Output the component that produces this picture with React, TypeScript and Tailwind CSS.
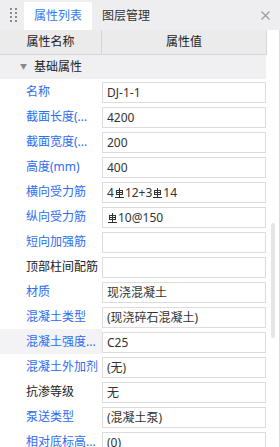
import React from "react";

const FONT = { fontFamily: '"Noto Sans", "Noto Sans CJK SC", sans-serif' };

function Rebar() {
  return (
    <svg width="9" height="10" viewBox="0 0 9 10" className="inline-block align-top mt-[1px] mx-[1px]" fill="none" stroke="#333" strokeWidth="1">
      <line x1="4.5" y1="0" x2="4.5" y2="9.5" />
      <rect x="1.5" y="2.5" width="6" height="4" />
      <line x1="1.5" y1="4.5" x2="7.5" y2="4.5" />
      <line x1="0" y1="9.5" x2="9" y2="9.5" />
    </svg>
  );
}

type Row = { label: string; value: React.ReactNode; black?: boolean; hover?: boolean };

const rows: Row[] = [
  { label: "名称", value: "DJ-1-1" },
  { label: "截面长度(...", value: "4200" },
  { label: "截面宽度(...", value: "200" },
  { label: "高度(mm)", value: "400" },
  { label: "横向受力筋", value: (<>4<Rebar />12+3<Rebar />14</>) },
  { label: "纵向受力筋", value: (<><Rebar />10@150</>) },
  { label: "短向加强筋", value: "" },
  { label: "顶部柱间配筋", value: "", black: true },
  { label: "材质", value: "现浇混凝土" },
  { label: "混凝土类型", value: "(现浇碎石混凝土)" },
  { label: "混凝土强度...", value: "C25", hover: true },
  { label: "混凝土外加剂", value: "(无)" },
  { label: "抗渗等级", value: "无", black: true },
  { label: "泵送类型", value: "(混凝土泵)" },
  { label: "相对底标高...", value: "(0)" },
];

export default function App() {
  return (
    <div className="w-[280px] h-[447px] overflow-hidden bg-white text-[12px] leading-[16px] text-[#333]" style={FONT}>
      {/* tab bar */}
      <div className="h-[30px] bg-[#eeeef0] flex items-end">
        <div className="w-[24px] h-[30px] flex items-center justify-center">
          <div className="grid grid-cols-2 gap-x-[3px] gap-y-[2px] ml-[2px]">
            {Array.from({ length: 8 }).map((_, i) => (
              <div key={i} className="w-[2px] h-[2px] bg-[#8a8a8a]" />
            ))}
          </div>
        </div>
        <div className="w-[68px] h-[28px] bg-white flex items-center justify-center text-[#2f7bf0]">属性列表</div>
        <div className="h-[28px] flex items-center pl-[10px] text-[#333]">图层管理</div>
        <div className="flex-1" />
        <div className="h-[30px] w-[30px] flex items-center justify-center">
          <svg width="9" height="9" viewBox="0 0 9 9" stroke="#999" strokeWidth="1.1">
            <line x1="0.5" y1="0.5" x2="8.5" y2="8.5" />
            <line x1="8.5" y1="0.5" x2="0.5" y2="8.5" />
          </svg>
        </div>
      </div>
      {/* body */}
      <div className="flex">
        <div className="w-[267px] shrink-0">
          <div className="h-[25px] flex bg-[#ebebeb] border-b border-[#d6d6d6] border-r">
            <div className="w-[102px] border-r border-[#d6d6d6] flex items-center justify-center text-[#222]">属性名称</div>
            <div className="flex-1 flex items-center justify-center text-[#222]">属性值</div>
          </div>
          <div className="h-[24px] w-[266px] bg-[#f0f0f2] flex items-center">
            <span className="ml-[20px] mr-[7px] text-[7px] text-[#888]">▼</span>
            <span className="text-[#222]">基础属性</span>
          </div>
          {rows.map((r, i) => (
            <div key={i} className="h-[25px] flex items-start">
              <div className={`w-[102px] h-[25px] flex items-center pl-[26px] whitespace-nowrap ${r.hover ? "bg-[#f3f3f5]" : ""} ${r.black ? "text-[#222]" : "text-[#2d6cf0]"}`}>
                {r.label}
              </div>
              <div className="mt-[3px] w-[164px] h-[21px] border border-[#dcdcdc] bg-white flex items-center pl-[4px] whitespace-nowrap text-[#333]">
                {r.value}
              </div>
            </div>
          ))}
        </div>
        <div className="flex-1 h-[417px] border-r border-[#dcdcdc]">
          <div className="mt-[193px] ml-[4px] w-[4px] h-[115px] bg-[#e4e4e4] rounded-[2px]" />
        </div>
      </div>
    </div>
  );
}
